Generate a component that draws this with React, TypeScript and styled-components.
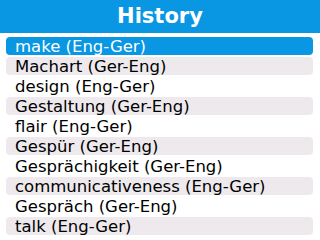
import * as React from "react";
import styled, {createGlobalStyle} from "styled-components";

const GlobalStyle = createGlobalStyle`
  html, body {
    margin: 0;
    padding: 0;
    background: #ffffff;
  }
  body {
    font-family: "DejaVu Sans", "Liberation Sans", sans-serif;
  }
`

const Screen = styled.div`
  width: 320px;
  height: 240px;
  overflow: hidden;
  background: #ffffff;
  display: flex;
  flex-direction: column;
`

const Header = styled.div`
  height: 33px;
  background: #0996e2;
  color: #ffffff;
  display: flex;
  align-items: center;
  justify-content: center;
  font-weight: bold;
  font-size: 21px;
  padding-bottom: 1px;
  box-sizing: border-box;
`

const List = styled.div`
  display: flex;
  flex-direction: column;
  gap: 2px;
  padding: 4px 7px 0 6px;
`

const Row = styled.div<{ $selected?: boolean; $shaded?: boolean }>`
  height: 18px;
  border-radius: 4px;
  padding-left: 9px;
  display: flex;
  align-items: center;
  font-size: 16.5px;
  white-space: nowrap;
  background: ${p => (p.$selected ? "#0996e2" : p.$shaded ? "#ede9ed" : "transparent")};
  color: ${p => (p.$selected ? "#ffffff" : "#000000")};
`

const entries = [
    "make (Eng-Ger)",
    "Machart (Ger-Eng)",
    "design (Eng-Ger)",
    "Gestaltung (Ger-Eng)",
    "flair (Eng-Ger)",
    "Gespür (Ger-Eng)",
    "Gesprächigkeit (Ger-Eng)",
    "communicativeness (Eng-Ger)",
    "Gespräch (Ger-Eng)",
    "talk (Eng-Ger)",
]

const App = () => {
    return (
        <>
            <GlobalStyle/>
            <Screen>
                <Header>History</Header>
                <List>
                    {entries.map((e, i) => (
                        <Row key={e} $selected={i === 0} $shaded={i % 2 === 1}>{e}</Row>
                    ))}
                </List>
            </Screen>
        </>
    )
};
export default App;
